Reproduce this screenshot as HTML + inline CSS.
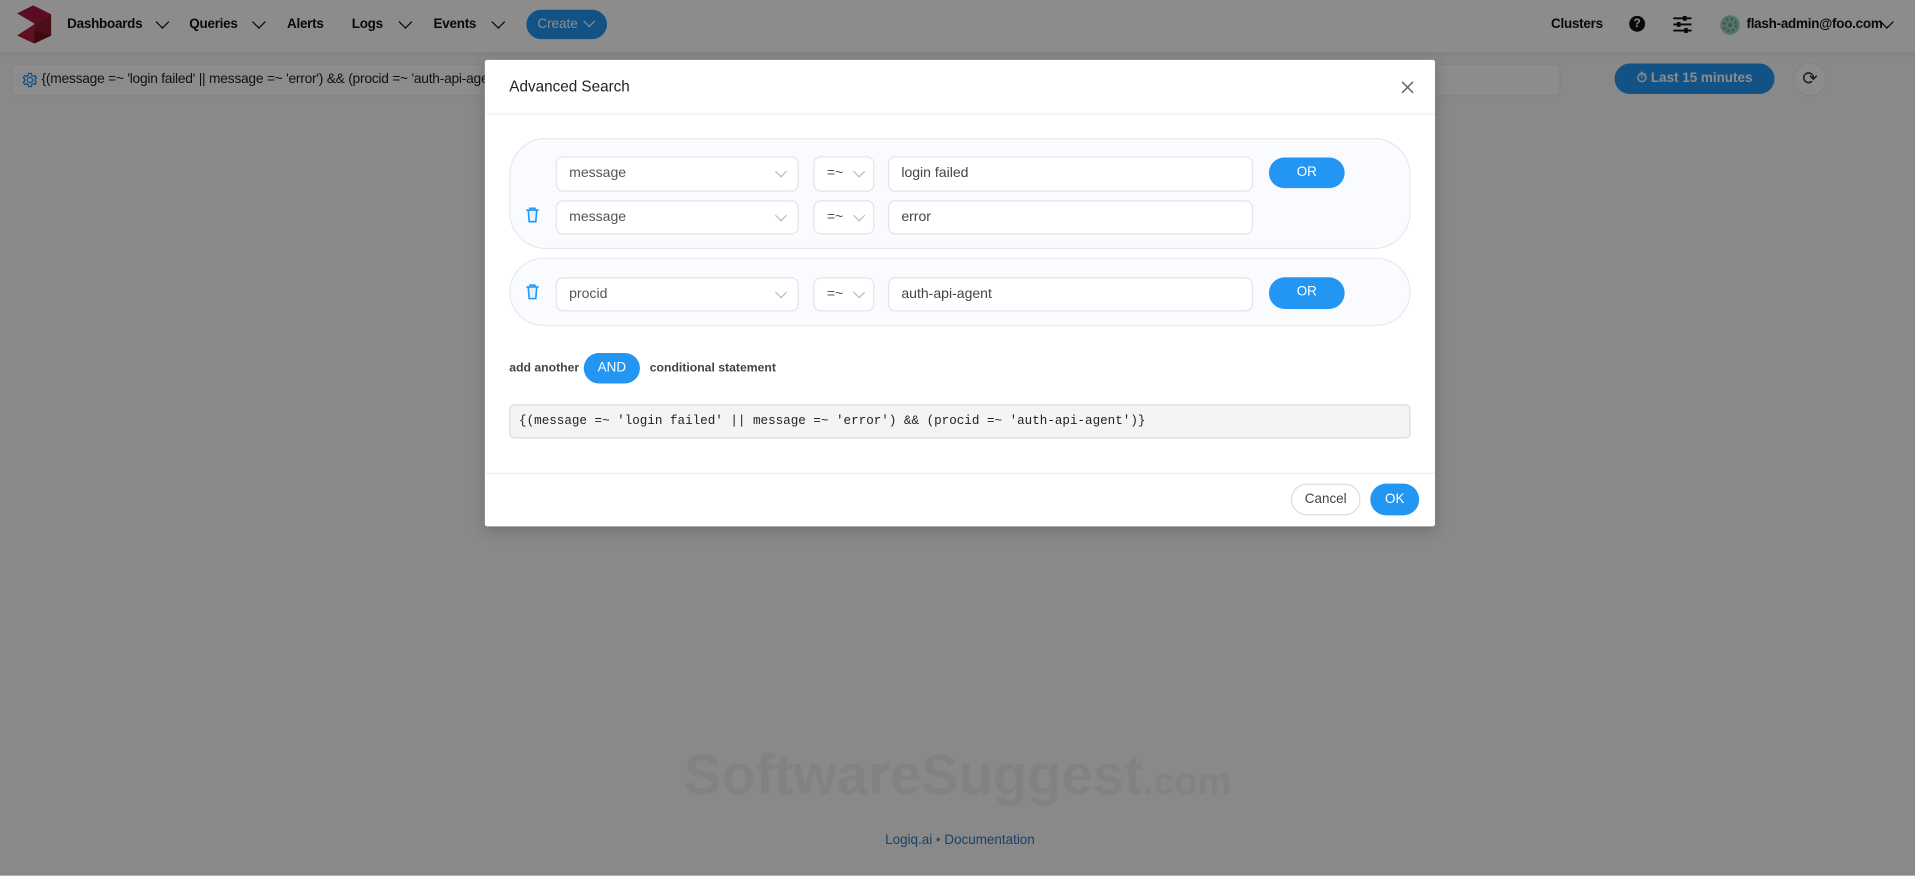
<!DOCTYPE html>
<html><head><meta charset="utf-8"><style>
html,body{margin:0;padding:0;width:1915px;height:876px;overflow:hidden;background:#fff;font-family:"Liberation Sans",Arial,sans-serif}
#w{position:absolute;left:0;top:0;width:1568px;height:717px;transform:scale(1.22130);transform-origin:0 0;background:#fafafa}
.a{position:absolute}
.nav{font-size:11px;font-weight:bold;color:#111;top:14px;letter-spacing:-0.2px}
.chev{position:absolute;width:7px;height:7px;border-right:1.6px solid #111;border-bottom:1.6px solid #111;transform:rotate(45deg)}
.sel{position:absolute;background:#fff;border:1px solid #e4e4ea;border-radius:6px;box-sizing:border-box;font-size:11.5px;color:#555;padding-left:10px;line-height:26px}
.sc{position:absolute;width:6px;height:6px;border-right:1px solid #bbb;border-bottom:1px solid #bbb;transform:rotate(45deg);top:8px}
.or{position:absolute;background:#2396f3;color:#fff;border-radius:13px;font-size:11px;text-align:center;line-height:25px}
.grp{position:absolute;left:417px;width:738px;background:#f9fbfe;border:1px solid #e8e9ee;border-radius:30px;box-sizing:border-box}
#ov{position:absolute;left:0;top:0;width:1568px;height:717px;background:rgba(0,0,0,.45)}
</style></head><body><div id="w">
<div class="a" style="left:0;top:0;width:1568px;height:43px;background:#fff;box-shadow:0 1px 4px rgba(0,0,0,.12)"></div>
<svg class="a" style="left:14px;top:4px" width="28" height="32" viewBox="17 5 34 38"><polygon points="17,13 33,5 51,14 34,23" fill="#a3163f"/><polygon points="51,14 51,35 34,43 34,23" fill="#8a1a2c"/><polygon points="17,35 34,24 34,43" fill="#b01b3f"/><polygon points="34,30 51,35 34,43" fill="#6e0f17"/></svg>
<div class="a nav" style="left:55px">Dashboards</div><div class="chev" style="left:129px;top:14px"></div>
<div class="a nav" style="left:155px">Queries</div><div class="chev" style="left:208px;top:14px"></div>
<div class="a nav" style="left:235px">Alerts</div>
<div class="a nav" style="left:288px">Logs</div><div class="chev" style="left:328px;top:14px"></div>
<div class="a nav" style="left:355px">Events</div><div class="chev" style="left:404px;top:14px"></div>
<div class="a" style="left:431px;top:8px;width:66px;height:24px;border-radius:12px;background:#2196f3;color:#fff;font-size:11px;line-height:24px;padding-left:9px;box-sizing:border-box">Create</div>
<div class="a" style="left:479px;top:14px;width:6px;height:6px;border-right:1.5px solid #fff;border-bottom:1.5px solid #fff;transform:rotate(45deg)"></div>
<div class="a nav" style="left:1270px">Clusters</div>
<div class="a" style="left:1334px;top:13px;width:13px;height:13px;border-radius:50%;background:#111;color:#fff;font-size:10px;font-weight:bold;text-align:center;line-height:13px">?</div>
<svg class="a" style="left:1370px;top:13px" width="15" height="14"><g stroke="#111" stroke-width="1.5"><line x1="0" y1="2" x2="15" y2="2"/><line x1="0" y1="7" x2="15" y2="7"/><line x1="0" y1="12" x2="15" y2="12"/></g><rect x="8" y="0" width="3" height="4" fill="#111"/><rect x="3" y="5" width="3" height="4" fill="#111"/><rect x="9" y="10" width="3" height="4" fill="#111"/></svg>
<svg class="a" style="left:1408px;top:12px" width="17" height="17"><circle cx="8.5" cy="8.5" r="8" fill="#9fd2c0"/><circle cx="8.5" cy="8.5" r="5" fill="none" stroke="#5fa78e" stroke-width="2" stroke-dasharray="2 2"/><circle cx="8.5" cy="8.5" r="1.6" fill="#5fa78e"/></svg>
<div class="a nav" style="left:1430px">flash-admin@foo.com</div><div class="chev" style="left:1541px;top:14px"></div>
<div class="a" style="left:9px;top:52px;width:1269px;height:27px;background:#fff;border:1px solid #eee;border-radius:4px;box-sizing:border-box"></div>
<svg class="a" style="left:18px;top:59px" width="13" height="13" viewBox="0 0 24 24"><path d="M12 8a4 4 0 1 0 0 8a4 4 0 1 0 0-8z M10 2h4l.6 3 2.4 1.4 2.9-1 2 3.4-2.3 2v2.4l2.3 2-2 3.4-2.9-1-2.4 1.4-.6 3h-4l-.6-3-2.4-1.4-2.9 1-2-3.4 2.3-2v-2.4l-2.3-2 2-3.4 2.9 1 2.4-1.4z" fill="none" stroke="#2196f3" stroke-width="2"/></svg>
<div class="a" style="left:34px;top:59px;font-size:11.3px;color:#222;letter-spacing:-0.2px">{(message =~ 'login failed' || message =~ 'error') &amp;&amp; (procid =~ 'auth-api-agent</div>
<div class="a" style="left:1322px;top:52px;width:131px;height:25px;border-radius:13px;background:#2196f3;color:#fff;font-size:11px;font-weight:bold;line-height:25px;text-align:center">⏱ Last 15 minutes</div>
<div class="a" style="left:1468px;top:51px;width:28px;height:28px;border-radius:50%;background:#fff;border:1px solid #eee;box-sizing:border-box;text-align:center;line-height:26px;font-size:15px;color:#333">⟳</div>
<div class="a" style="left:560px;top:607px;font-size:46px;font-weight:bold;color:#ededed;letter-spacing:0px">SoftwareSuggest<span style="font-size:31px">.com</span></div>
<div class="a" style="left:0;width:1572px;top:682px;text-align:center;font-size:11px;color:#2a78c0">Logiq.ai <span style="color:#888">•</span> Documentation</div>
<div id="ov"></div>
<div class="a" style="left:397px;top:49px;width:778px;height:382px;background:#fff;border-radius:2px;box-shadow:0 3px 12px rgba(0,0,0,.2)">
<div class="a" style="left:20px;top:15px;font-size:12.5px;color:#222;font-weight:500">Advanced Search</div>
<svg class="a" style="left:750px;top:17px" width="11" height="11"><path d="M1 1L10 10M10 1L1 10" stroke="#666" stroke-width="1.2"/></svg>
<div class="a" style="left:0;top:44px;width:778px;height:1px;background:#eee"></div>
<div class="a" style="left:0;top:338px;width:778px;height:1px;background:#eee"></div>
<div class="a" style="left:660px;top:347px;width:57px;height:26px;border:1px solid #ddd;border-radius:14px;box-sizing:border-box;font-size:11px;color:#444;text-align:center;line-height:24px">Cancel</div>
<div class="a" style="left:725px;top:347px;width:40px;height:26px;border-radius:14px;background:#2196f3;color:#fff;font-size:11px;text-align:center;line-height:26px">OK</div>
</div>
<div class="grp" style="top:113px;height:91px"></div>
<div class="grp" style="top:211px;height:56px"></div>
<div class="sel" style="left:455px;top:128px;width:199px;height:29px">message<div class="sc" style="left:180px"></div></div>
<div class="sel" style="left:666px;top:128px;width:50px;height:29px">=~<div class="sc" style="left:33px"></div></div>
<div class="sel" style="left:727px;top:128px;width:299px;height:29px;color:#444">login failed</div>
<div class="or" style="left:1039px;top:129px;width:62px;height:25px">OR</div>
<div class="sel" style="left:455px;top:164px;width:199px;height:28px">message<div class="sc" style="left:180px"></div></div>
<div class="sel" style="left:666px;top:164px;width:50px;height:28px">=~<div class="sc" style="left:33px"></div></div>
<div class="sel" style="left:727px;top:164px;width:299px;height:28px;color:#444">error</div>
<div class="sel" style="left:455px;top:227px;width:199px;height:28px">procid<div class="sc" style="left:180px"></div></div>
<div class="sel" style="left:666px;top:227px;width:50px;height:28px">=~<div class="sc" style="left:33px"></div></div>
<div class="sel" style="left:727px;top:227px;width:299px;height:28px;color:#444">auth-api-agent</div>
<div class="or" style="left:1039px;top:227px;width:62px;height:26px">OR</div>
<svg class="a" style="left:430px;top:169px" width="12" height="14"><path d="M1 3H11M4 3V1.5H8V3M2.5 3L3.3 12.5H8.7L9.5 3" fill="#e3f1fd" stroke="#2196f3" stroke-width="1.3"/></svg>
<svg class="a" style="left:430px;top:232px" width="12" height="14"><path d="M1 3H11M4 3V1.5H8V3M2.5 3L3.3 12.5H8.7L9.5 3" fill="#e3f1fd" stroke="#2196f3" stroke-width="1.3"/></svg>
<div class="a" style="left:417px;top:296px;font-size:10px;font-weight:bold;color:#444">add another</div>
<div class="a" style="left:478px;top:289px;width:46px;height:25px;border-radius:13px;background:#2396f3;color:#fff;font-size:11px;text-align:center;line-height:25px">AND</div>
<div class="a" style="left:532px;top:296px;font-size:10px;font-weight:bold;color:#444">conditional statement</div>
<div class="a" style="left:417px;top:331px;width:738px;height:28px;background:#f4f4f4;border:1px solid #dcdcdc;border-radius:4px;box-sizing:border-box;font-family:'Liberation Mono',monospace;font-size:10.3px;color:#222;line-height:26px;padding-left:7px">{(message =~ 'login failed' || message =~ 'error') &amp;&amp; (procid =~ 'auth-api-agent')}</div>
</div></body></html>
